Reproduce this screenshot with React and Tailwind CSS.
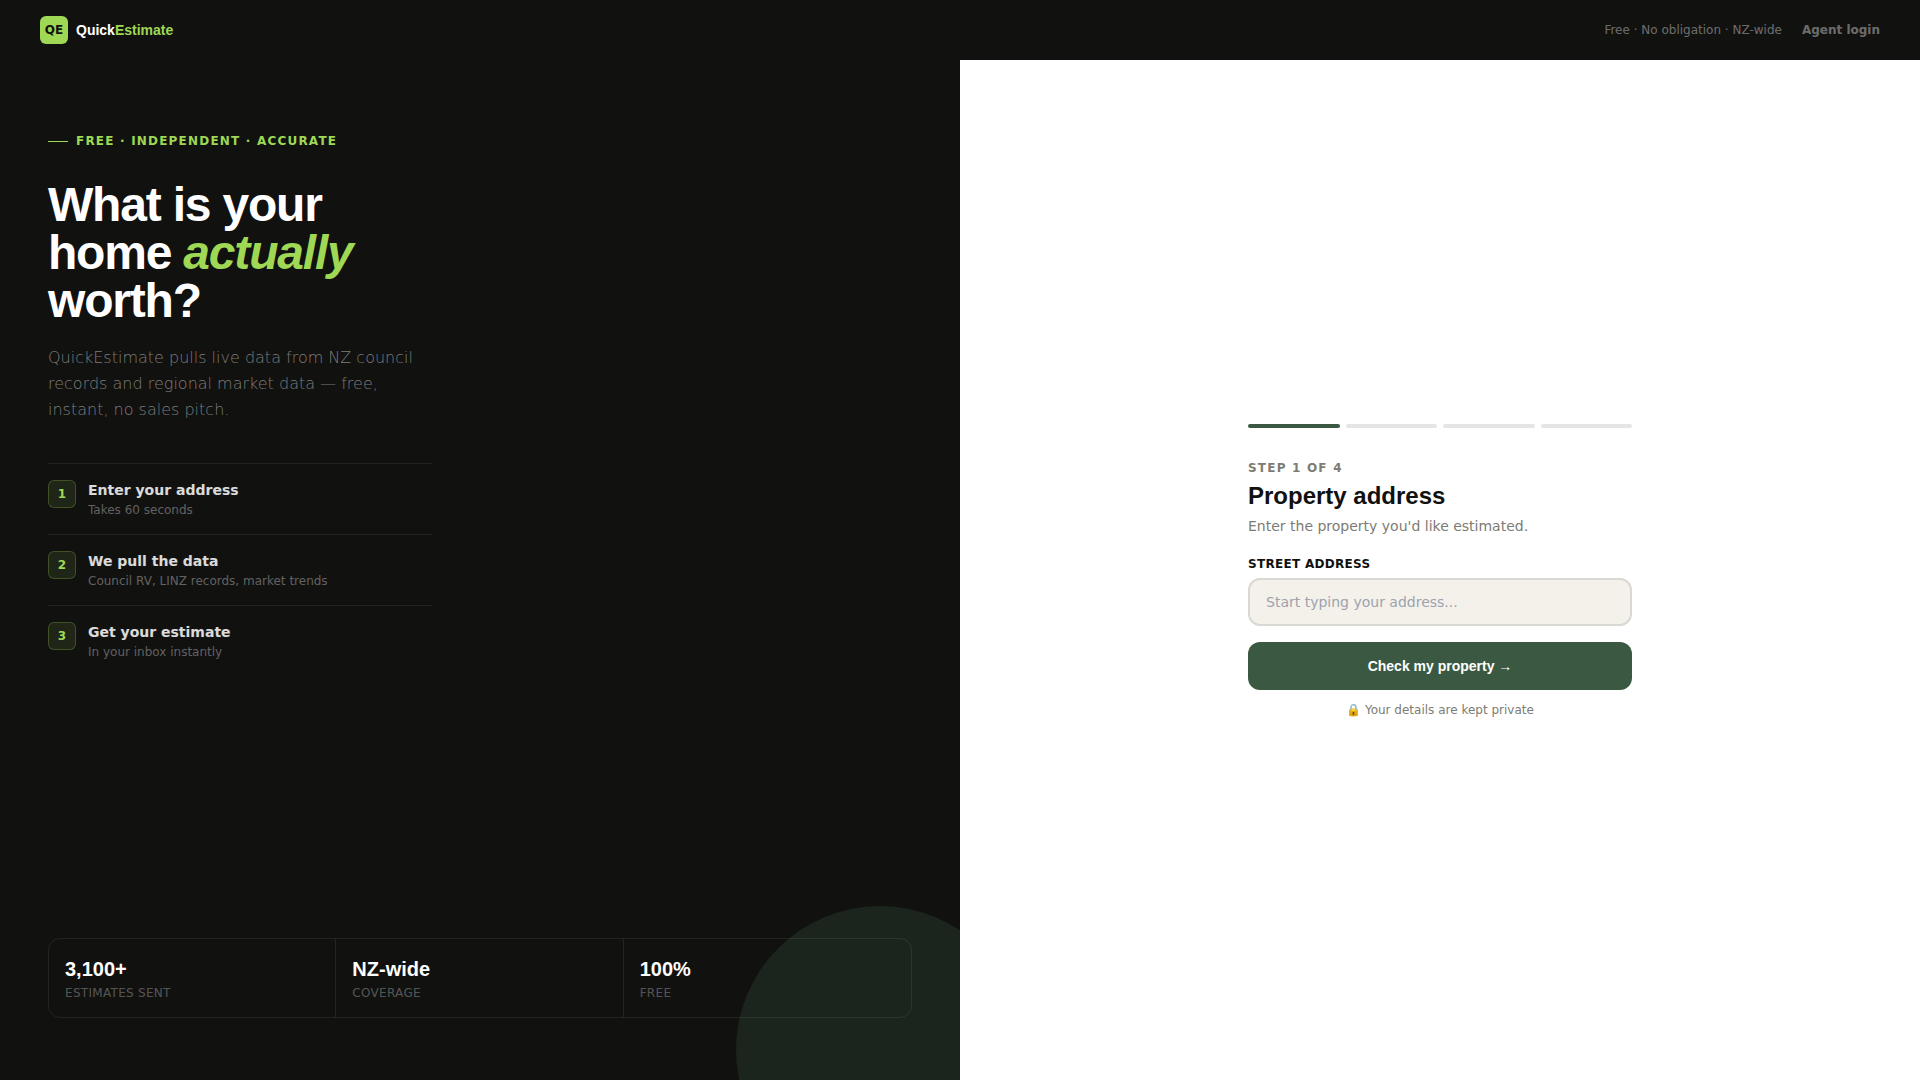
import React, { useState } from 'react';

const steps = [
  { title: 'Enter your address', text: 'Takes 60 seconds' },
  { title: 'We pull the data', text: 'Council RV, LINZ records, market trends' },
  { title: 'Get your estimate', text: 'In your inbox instantly' },
];

const stats = [
  { value: '3,100+', label: 'Estimates sent' },
  { value: 'NZ-wide', label: 'Coverage' },
  { value: '100%', label: 'Free' },
];

const TOTAL_STEPS = 4;

function Header() {
  return (
    <header className="flex h-[60px] items-center justify-between bg-[#111110] px-10">
      <a href="#" className="flex items-center gap-2">
        <span className="flex h-7 w-7 items-center justify-center rounded-md bg-[#9fd854] text-xs font-bold text-[#111110]">
          QE
        </span>
        <span className="font-['Liberation_Sans',sans-serif] text-sm font-bold text-white">
          Quick<span className="text-[#9fd854]">Estimate</span>
        </span>
      </a>
      <div className="flex items-center gap-5 text-xs text-white/40">
        <span>Free · No obligation · NZ-wide</span>
        <a href="#login" className="font-semibold">Agent login</a>
      </div>
    </header>
  );
}

function Intro() {
  return (
    <section className="relative flex flex-col justify-between overflow-hidden bg-[#111110] px-12 pt-[73px] pb-[62px]">
      <div className="absolute -right-16 -bottom-[114px] h-72 w-72 rounded-full bg-[#3b5942]/28" />

      <div className="relative">
        <div className="mb-8 flex items-center gap-2 text-xs font-bold uppercase tracking-widest text-[#9fd854]">
          <span className="h-px w-5 bg-[#9fd854]" />
          Free · Independent · Accurate
        </div>
        <h1 className="mb-5 max-w-sm font-['Liberation_Sans',sans-serif] text-5xl leading-none font-bold tracking-tight text-white">
          What is your home <em className="text-[#9fd854]">actually</em> worth?
        </h1>
        <p className="mb-10 max-w-sm text-base leading-[26px] font-light text-white/45">
          QuickEstimate pulls live data from NZ council records and regional market data — free, instant, no sales pitch.
        </p>
        <ol className="max-w-sm">
          {steps.map((step, idx) => (
            <li key={step.title} className="flex items-start gap-3 border-t border-white/8 py-4">
              <span className="flex h-7 w-7 shrink-0 items-center justify-center rounded-md border border-[#9fd854]/25 bg-[#9fd854]/10 text-xs font-bold text-[#9fd854]">
                {idx + 1}
              </span>
              <div>
                <div className="text-sm font-semibold text-white/85">{step.title}</div>
                <div className="mt-0.5 text-xs text-white/35">{step.text}</div>
              </div>
            </li>
          ))}
        </ol>
      </div>

      <div className="relative grid grid-cols-3 overflow-hidden rounded-xl border border-white/8">
        {stats.map((stat) => (
          <div key={stat.label} className="border-r border-white/8 p-4 last:border-r-0">
            <div className="font-['Liberation_Sans',sans-serif] text-xl font-bold text-white">{stat.value}</div>
            <div className="mt-0.5 text-xs uppercase tracking-wide text-white/30">{stat.label}</div>
          </div>
        ))}
      </div>
    </section>
  );
}

function AddressForm() {
  const [address, setAddress] = useState('');
  const current = 1;

  return (
    <form className="w-full max-w-sm" onSubmit={(e) => e.preventDefault()}>
      <div className="mb-8 flex gap-1.5">
        {Array.from({ length: TOTAL_STEPS }, (_, idx) => (
          <div
            key={idx}
            className={`h-1 flex-1 rounded-full ${idx < current ? 'bg-[#3b5942]' : 'bg-[#e5e5e5]'}`}
          />
        ))}
      </div>

      <div className="mb-1 text-xs font-bold uppercase tracking-widest text-[#7c7c74]">
        Step {current} of {TOTAL_STEPS}
      </div>
      <h2 className="mb-1 font-['Liberation_Sans',sans-serif] text-2xl font-bold text-[#111110]">Property address</h2>
      <p className="mb-5 text-sm text-[#7c7c74]">Enter the property you'd like estimated.</p>

      <label htmlFor="address" className="mb-1.5 block text-xs font-bold uppercase tracking-wide text-[#111110]">
        Street address
      </label>
      <input
        id="address"
        type="text"
        placeholder="Start typing your address..."
        className="mb-4 h-12 w-full rounded-xl border-2 border-[#d9d8d2] bg-[#f4f1ea] px-4 text-sm text-[#111110] placeholder-[#9ca3af] focus:outline-none"
        value={address}
        onChange={(e) => setAddress(e.target.value)}
      />

      <button
        type="submit"
        className="h-12 w-full rounded-xl bg-[#3b5942] font-['Liberation_Sans','DejaVu_Sans',sans-serif] text-sm font-bold text-white"
      >
        Check my property →
      </button>
      <p className="mt-3 text-center text-xs text-[#7c7c74]">🔒 Your details are kept private</p>
    </form>
  );
}

export default function App() {
  return (
    <div className="flex min-h-screen flex-col bg-white font-['DejaVu_Sans',sans-serif]">
      <Header />
      <main className="grid flex-1 grid-cols-2">
        <Intro />
        <section className="flex items-center justify-center px-12 pt-[50px] pb-12">
          <AddressForm />
        </section>
      </main>
    </div>
  );
}
